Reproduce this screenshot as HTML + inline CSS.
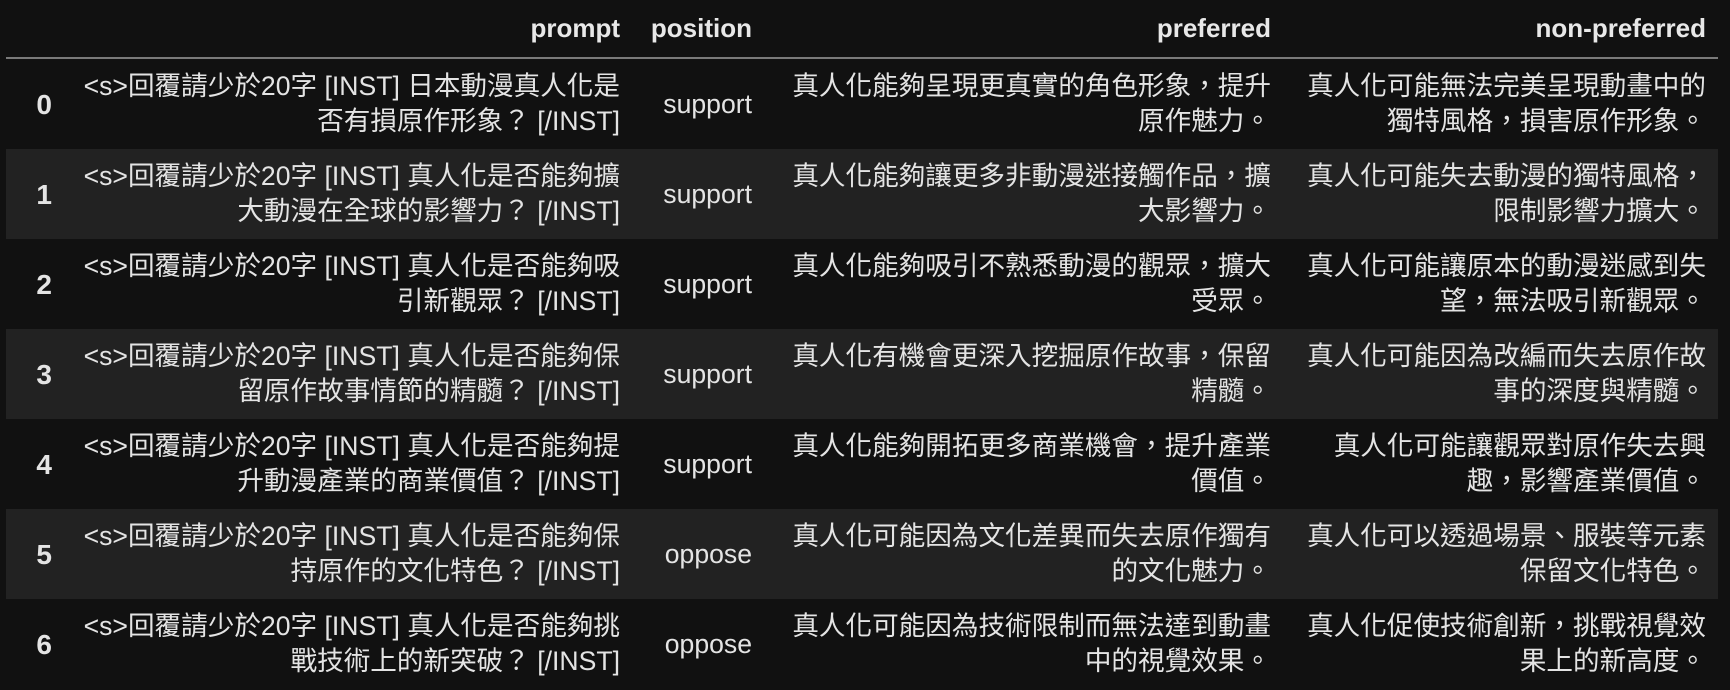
<!DOCTYPE html>
<html><head><meta charset="utf-8"><style>
body{margin:0;background:#111;width:1730px;height:690px;overflow:hidden;}
table{position:absolute;left:6px;top:0;border-collapse:collapse;table-layout:fixed;width:1712px;
font-family:"Liberation Sans","Noto Sans CJK TC",sans-serif;font-size:26.6px;color:#e4e4e4;}
th{font-weight:bold;height:57px;text-align:right;padding:0 12px;border-bottom:2px solid #7a7a7a;vertical-align:middle;color:#e8e8e8;font-size:26px;}
td{height:90px;padding:0 12px;text-align:right;vertical-align:middle;line-height:35px;white-space:nowrap;}
td.i{font-weight:bold;padding:0 12px 0 0;text-align:right;font-size:28px;}
tr.a td{background:#222;}
</style></head><body>
<table>
<colgroup><col style="width:58px"><col style="width:568px"><col style="width:132px"><col style="width:519px"><col style="width:435px"></colgroup>
<tr><th></th><th>prompt</th><th>position</th><th>preferred</th><th>non-preferred</th></tr>
<tr><td class="i">0</td><td>&lt;s&gt;回覆請少於20字 [INST] 日本動漫真人化是<br>否有損原作形象？ [/INST]</td><td>support</td><td>真人化能夠呈現更真實的角色形象，提升<br>原作魅力。</td><td>真人化可能無法完美呈現動畫中的<br>獨特風格，損害原作形象。</td></tr>
<tr class="a"><td class="i">1</td><td>&lt;s&gt;回覆請少於20字 [INST] 真人化是否能夠擴<br>大動漫在全球的影響力？ [/INST]</td><td>support</td><td>真人化能夠讓更多非動漫迷接觸作品，擴<br>大影響力。</td><td>真人化可能失去動漫的獨特風格，<br>限制影響力擴大。</td></tr>
<tr><td class="i">2</td><td>&lt;s&gt;回覆請少於20字 [INST] 真人化是否能夠吸<br>引新觀眾？ [/INST]</td><td>support</td><td>真人化能夠吸引不熟悉動漫的觀眾，擴大<br>受眾。</td><td>真人化可能讓原本的動漫迷感到失<br>望，無法吸引新觀眾。</td></tr>
<tr class="a"><td class="i">3</td><td>&lt;s&gt;回覆請少於20字 [INST] 真人化是否能夠保<br>留原作故事情節的精髓？ [/INST]</td><td>support</td><td>真人化有機會更深入挖掘原作故事，保留<br>精髓。</td><td>真人化可能因為改編而失去原作故<br>事的深度與精髓。</td></tr>
<tr><td class="i">4</td><td>&lt;s&gt;回覆請少於20字 [INST] 真人化是否能夠提<br>升動漫產業的商業價值？ [/INST]</td><td>support</td><td>真人化能夠開拓更多商業機會，提升產業<br>價值。</td><td>真人化可能讓觀眾對原作失去興<br>趣，影響產業價值。</td></tr>
<tr class="a"><td class="i">5</td><td>&lt;s&gt;回覆請少於20字 [INST] 真人化是否能夠保<br>持原作的文化特色？ [/INST]</td><td>oppose</td><td>真人化可能因為文化差異而失去原作獨有<br>的文化魅力。</td><td>真人化可以透過場景、服裝等元素<br>保留文化特色。</td></tr>
<tr><td class="i">6</td><td>&lt;s&gt;回覆請少於20字 [INST] 真人化是否能夠挑<br>戰技術上的新突破？ [/INST]</td><td>oppose</td><td>真人化可能因為技術限制而無法達到動畫<br>中的視覺效果。</td><td>真人化促使技術創新，挑戰視覺效<br>果上的新高度。</td></tr>
</table>
</body></html>
